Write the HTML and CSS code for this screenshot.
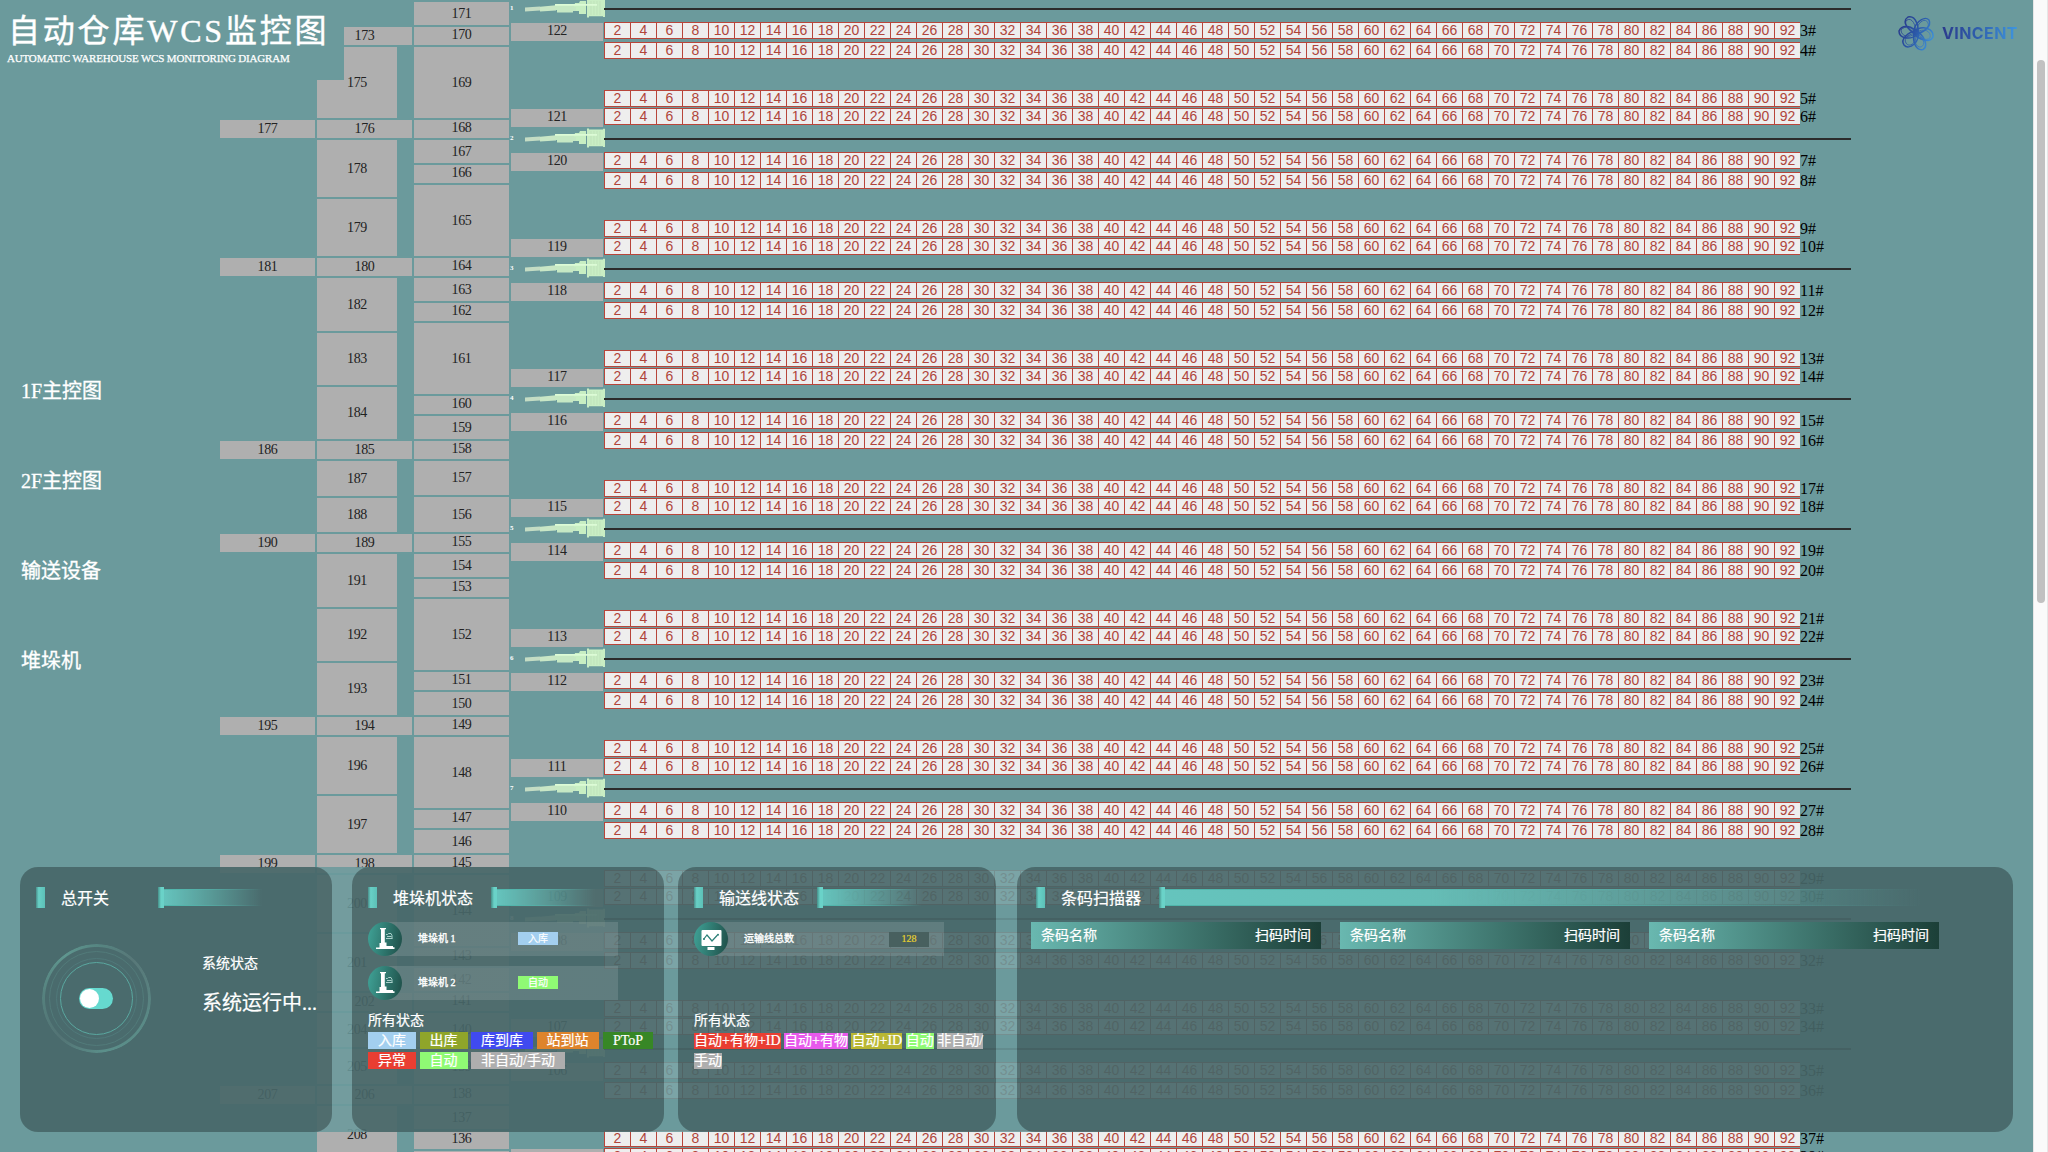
FILE: index.html
```html
<!DOCTYPE html>
<html lang="zh-CN">
<head>
<meta charset="utf-8">
<title>自动仓库WCS监控图</title>
<link rel="stylesheet" href="styles.css">
</head>
<body>
<svg class="defs" width="0" height="0" aria-hidden="true">
  <symbol id="crane" viewBox="0 0 80 20">
    <path d="M0 9.6 15 8.6V12.4L0 13.6Z" fill="#c4dcc4"/>
    <path d="M15 8.8 31 7.2V12.6L15 13.4Z" fill="#c9e6c6"/>
    <path d="M30 6H55V13H48V14.4H32V12H30Z" fill="#c6e8c4"/>
    <path d="M50 5 54 5 55 3H61V16H54V13H51V9H49Z" fill="#c8efc3"/>
    <path d="M62 .4H64V1.6H78V.8H80V19H78V18.2H64V19.4H62Z" fill="#c9eec4"/>
    <path d="M66 3V17M69 3V17M72 3V17M75 3V17" stroke="#bcdcb9" stroke-width=".7"/>
    <path d="M30 6.8H72" stroke="#dcfbd6" stroke-width="1.8"/>
  </symbol>
  <symbol id="stacker" viewBox="0 0 34 34">
    <path d="M12 6h6v1.200h-1.200V20.500H18.500v3.500h6.500v1.200h1.500v1.800H8v-1.600h3.500V21H13V7.200h-1Z" fill="#fff"/>
    <path d="M18 16.500h6.500M18 12.500h1.500l1-1h2.500l1 2v3M19 14.500h4.500" stroke="#a9cfca" stroke-width="1" fill="none"/>
  </symbol>
  <symbol id="monitor" viewBox="0 0 34 34">
    <rect x="7.500" y="8" width="20" height="16" rx="1" fill="#fff"/>
    <path d="M9.500 17.500 13 13l5 6 5.500-6" stroke="#2b7f77" stroke-width="1.200" fill="none"/>
    <circle cx="10" cy="17" r="1" fill="#2b7f77"/><circle cx="24" cy="12.800" r="1" fill="#2b7f77"/>
    <path d="M13.500 25h7v3h-7Z" fill="#fff"/>
  </symbol>
</svg>

<div class="screen">
  <main class="map">
    <div class="lane lane-a" id="laneA"></div>
    <div class="lane" id="laneB"></div>
    <div class="lane" id="laneC"></div>
    <div class="ports" id="ports"></div>
    <div class="racks" id="racks"></div>
  </main>

  <header class="title">
    <h1>自动仓库WCS监控图</h1>
    <p>AUTOMATIC WAREHOUSE WCS MONITORING DIAGRAM</p>
  </header>

  <div class="logo">
    <svg width="36" height="36" viewBox="-18 -18 36 36">
      <defs>
        <linearGradient id="lg" gradientUnits="userSpaceOnUse" x1="-17" y1="-8" x2="17" y2="8">
          <stop offset="0" stop-color="#27388a"/><stop offset=".5" stop-color="#2b58a8"/><stop offset="1" stop-color="#3d93dc"/>
        </linearGradient>
      </defs>
      <g fill="none" stroke="url(#lg)" stroke-width="1.500">
        <path d="M1 2C-10-4-14-12-8-16 0-18 4-5 1 2Z"/>
        <path d="M-2 2C-4-9 8-18 13-13 16-7 8 0-2 2Z"/>
        <path d="M-3-1C7-9 18-4 17 4 14 10 3 8-3-1Z"/>
        <path d="M-1-3C10 3 12 14 7 16.500 0 18-5 8-1-3Z"/>
        <path d="M2-3C5 9-7 18-12 12-16 6-8-1 2-3Z"/>
        <path d="M3 1C-7 8-17 5-17-2-14-9-4-8 3 1Z"/>
        <path stroke-width=".8" d="M0 0C-8-4-13-9-9-13-4-16 0-8 0 0ZM0 0C0-9 9-17 12-10 14-5 7-1 0 0ZM0 0C7-6 16-2 14 5 10 8 4 6 0 0ZM0 0C8 4 10 12 5 14 0 15-3 7 0 0ZM0 0C2 8-6 16-10 10-13 5-7 1 0 0ZM0 0C-7 6-15 3-15-3-11-8-4-6 0 0Z"/>
      </g>
    </svg>
    <span>VINCENT</span>
  </div>

  <nav class="menu">
    <a>1F主控图</a><a>2F主控图</a><a>输送设备</a><a>堆垛机</a>
  </nav>

  <section class="dock">
    <article class="panel p-switch">
      <h2><i class="mark"></i><span>总开关</span><i class="pin"></i><i class="beam"></i></h2>
      <div class="power">
        <div class="dial"><div class="ring r2"></div><div class="ring r3"></div><div class="ring r4"></div><div class="toggle"><b></b></div></div>
        <div class="state"><p>系统状态</p><strong>系统运行中...</strong></div>
      </div>
    </article>
    <article class="panel p-stacker">
      <h2><i class="mark"></i><span>堆垛机状态</span><i class="pin"></i><i class="beam"></i></h2>
      <div class="device"><svg class="badge"><use href="#stacker"/></svg><b>堆垛机 1</b><em class="blue">入库</em></div>
      <div class="device"><svg class="badge"><use href="#stacker"/></svg><b>堆垛机 2</b><em class="green">自动</em></div>
      <div class="legend">
        <p>所有状态</p>
        <div><span class="blue">入库</span> <span class="olive">出库</span> <span class="indigo">库到库</span> <span class="orange">站到站</span> <span class="forest">PToP</span></div>
        <div><span class="red">异常</span> <span class="green">自动</span> <span class="grey">非自动/手动</span></div>
      </div>
    </article>
    <article class="panel p-line">
      <h2><i class="mark"></i><span>输送线状态</span><i class="pin"></i><i class="beam"></i></h2>
      <div class="device"><svg class="badge"><use href="#monitor"/></svg><b>运输线总数</b><em class="count">128</em></div>
      <div class="legend tight">
        <p>所有状态</p>
        <div><span class="red">自动+有物+ID</span> <span class="pink">自动+有物</span> <span class="mustard">自动+ID</span> <span class="green">自动</span> <span class="grey">非自动/<wbr>手动</span></div>
      </div>
    </article>
    <article class="panel p-scan">
      <h2><i class="mark"></i><span>条码扫描器</span><i class="pin"></i><i class="beam"></i></h2>
      <div class="tables">
        <div><span>条码名称</span><span>扫码时间</span></div>
        <div><span>条码名称</span><span>扫码时间</span></div>
        <div><span>条码名称</span><span>扫码时间</span></div>
      </div>
    </article>
  </section>

  <div class="scrollbar"><i></i></div>
</div>
<script src="script.js"></script>
</body>
</html>
```
FILE: styles.css
```css
* { box-sizing: border-box; margin: 0; padding: 0; }
body { width: 2048px; height: 1152px; overflow: hidden; background: #6b9a9c; font-family: "Liberation Serif", "Noto Sans CJK SC", serif; }
i, em { font-style: normal; }
.defs { position: absolute; }
.screen { position: relative; width: 2048px; height: 1152px; overflow: hidden; }

/* conveyor map */
.map { display: flex; height: 1152px; padding-left: 220px; align-items: flex-start; overflow: hidden; }
.lane { width: 95px; margin-right: 2px; flex: none; }
.cell { display: flex; align-items: center; justify-content: center; background: #afafaf; color: #222; font-size: 14px; line-height: 16px; letter-spacing: -.3px; }
.cell.half { width: 80px; }
.cell.slim { padding-bottom: 1px; }
.cell.up { padding-bottom: 3px; }
.ports { width: 92px; margin: -3px 1px 0 0; flex: none; }
.ports .cell { height: 18px; padding-bottom: 2px; }
.ports .cell.low { margin-top: 68px; }
.crane { display: flex; height: 26px; width: 94px; }
.crane span { width: 15px; margin-left: -1px; padding-top: 7px; color: #fff; font-size: 7px; line-height: 8px; font-weight: bold; flex: none; }
.crane svg { width: 80px; height: 20px; margin-top: 1px; flex: none; }
.racks { padding-top: 8px; flex: none; }
.rail { width: 1247px; height: 2px; background: #2c2c2c; margin: 13px 0 12px; }
.rail:first-child { margin-top: 0; }
.row { display: flex; height: 17px; }
.row i { width: 26px; background: #eee; border: 1px solid #b8453a; border-right: 0; color: #b0443a; font: 14px/15px "Liberation Sans", sans-serif; text-align: center; }
.row b { font-weight: normal; font-size: 16px; line-height: 18px; color: #000; }
.row.g3 { margin-top: 3px; }
.row.g31 { margin-top: 31px; }
.row.g1 { margin-top: 1px; }

/* overlays on the map */
.title { position: absolute; left: 0; top: 0; width: 344px; height: 80px; background: #6b9a9c; color: #fff; padding: 9px 0 0 8px; }
.title h1 { font-size: 32px; line-height: 44px; font-weight: normal; letter-spacing: 2.8px; white-space: nowrap; -webkit-text-stroke: .4px #fff; }
.title p { font-size: 11px; line-height: 12px; margin: -1px 0 0 -1px; letter-spacing: -.18px; white-space: nowrap; -webkit-text-stroke: .25px #fff; }
.logo { position: absolute; left: 1898px; top: 15px; display: flex; align-items: center; gap: 8px; }
.logo span { font: 700 16px/20px Inter, sans-serif; letter-spacing: .4px; background: linear-gradient(90deg, #2b3a8c, #2e5cab 45%, #3f97df); -webkit-background-clip: text; background-clip: text; color: transparent; }
.menu { position: absolute; left: 21px; top: 346px; display: flex; flex-direction: column; color: #fff; font-size: 20px; line-height: 90px; -webkit-text-stroke: .3px #fff; }

/* bottom dock */
.dock { position: absolute; left: 0; top: 867px; width: 2033px; height: 265px; padding-left: 20px; display: flex; background: rgba(107, 154, 156, .88); color: #fff; -webkit-text-stroke: .2px #fff; }
.panel { border-radius: 18px; background: rgba(0, 0, 0, .3); padding: 20px 0 0 16px; flex: none; }
.p-switch, .p-stacker { width: 312px; margin-right: 20px; }
.p-stacker { margin-right: 14px; }
.p-line { width: 318px; margin-right: 21px; }
.p-scan { width: 996px; }
.panel h2 { display: flex; align-items: center; height: 21px; font-size: 16px; line-height: 21px; font-weight: normal; white-space: nowrap; }
.mark { width: 9px; height: 21px; background: linear-gradient(90deg, #4a908c, #68d0c6 30%, #5cc0b7); }
.panel h2 span { margin: 0 18px 0 16px; padding-top: 2px; }
.pin { width: 6px; height: 21px; background: linear-gradient(90deg, #459089, #6ad2c8 50%); }
.beam { width: 98px; height: 17px; border: solid; border-width: 1px 0; border-image: linear-gradient(90deg, #4fb5ab, transparent) 1; background: linear-gradient(90deg, #65c4bd, rgba(101, 196, 189, 0)); }
.p-switch h2 .pin { margin-left: 31px; }
.p-scan .beam { width: 756px; background: linear-gradient(90deg, #65c4bd, #65bdb6 35%, rgba(101, 189, 182, 0)); }
.p-scan h2 { padding-left: 3px; }

.power { display: flex; padding: 36px 0 0 6px; }
.dial { position: relative; width: 109px; height: 109px; border-radius: 50%; display: flex; align-items: center; justify-content: center; }
.dial::before { content: ""; position: absolute; inset: 0; border-radius: 50%; background: conic-gradient(#568682, rgba(120,150,148,.3) 12%, #5a8a86 32%, #5b8f8a 48%, rgba(120,150,148,.2) 62%, #55807d 75%, #5f968f 90%, #568682); -webkit-mask: radial-gradient(circle, transparent 51px, #000 52px); mask: radial-gradient(circle, transparent 51px, #000 52px); }
.ring { position: absolute; border-radius: 50%; border: 1px solid #53807d; }
.r2 { inset: 7px; border-color: #527b7a; }
.r3 { inset: 14px; border-color: #50797a; }
.r4 { inset: 18px; border-color: #5aa8a0; }
.toggle { width: 34px; height: 21px; border-radius: 11px; background: #66d9cf; padding: 1px; margin-left: -1px; }
.toggle b { display: block; width: 19px; height: 19px; border-radius: 50%; background: #fff; }
.state { padding: 11px 0 0 51px; }
.state p { font-size: 14px; line-height: 18px; }
.state strong { display: block; font-weight: normal; font-size: 20px; line-height: 28px; margin-top: 16px; white-space: nowrap; }

.device { display: flex; align-items: center; position: relative; width: 250px; height: 34px; margin-top: 14px; background: linear-gradient(rgba(255,255,255,.12), rgba(255,255,255,.12)) no-repeat; background-size: 233px 34px; background-position: 17px 0; font-size: 10px; }
.device + .device { margin-top: 10px; }
.badge { width: 34px; height: 34px; border-radius: 50%; background: linear-gradient(100deg, #40a498, #1e4d47); flex: none; }
.device b { width: 100px; margin-left: 16px; line-height: 14px; font-weight: normal; -webkit-text-stroke: .35px #fff; }
.device em { width: 40px; height: 13px; line-height: 13px; text-align: center; margin-top: -1px; }
.device .count { margin: 1px 0 0 45px; height: 15px; line-height: 14px; background: #48605f; color: #e8d22e; -webkit-text-stroke: .2px #e8d22e; }

.legend { font-size: 14px; line-height: 20px; padding-top: 11px; }
.legend p { line-height: 20px; }
.legend div { height: 20px; white-space: nowrap; display: flex; gap: 3.5px; }
.legend span { height: 17px; line-height: 17px; padding: 0 10px; margin-top: 1px; }
.tight { padding-top: 55px; }
.tight div { display: block; width: 292px; height: 40px; white-space: normal; }
.tight span { padding: 0 0 1px; line-height: 20px; }
.blue { background: #a3cfef; }
.olive { background: #8fa52a; }
.indigo { background: #404af0; }
.orange { background: #de842c; }
.forest { background: #378726; margin-left: 1px; }
.red { background: #e93e32; }
.green { background: #8ffa74; }
.grey { background: #aeaeae; }
.pink { background: #e859ec; }
.mustard { background: #b9b733; }

.tables { display: flex; gap: 19px; margin: 14px 0 0 -2px; }
.tables div { width: 290px; height: 27px; padding: 0 10px; display: flex; justify-content: space-between; align-items: center; background: linear-gradient(90deg, #69b8b0, #1c3f38); font-size: 14px; line-height: 20px; }

.scrollbar { position: absolute; right: 0; top: 0; width: 15px; height: 1152px; background: #fafafa; border: solid #e6e6e6; border-width: 0 1px; padding: 60px 0 0 3px; }
.scrollbar i { display: block; width: 8px; height: 543px; border-radius: 4px; background: #c1c1c1; }
```
FILE: script.js
```js
// [number, top, height, half-width]
var laneA = [[177,120,18],[181,258,18],[186,441,18],[190,534,18],[195,717,18],[199,855,18],[207,1086,18]];
var laneB = [[173,27,18],[175,47,71,1],[176,120,18],[178,140,57,1],[179,199,57,1],[180,258,18],[182,278,53,1],
  [183,333,52,1],[184,387,52,1],[185,441,18],[187,461,35,1],[188,498,34,1],[189,534,18],[191,554,53,1],[192,609,52,1],
  [193,663,52,1],[194,717,18],[196,737,57,1],[197,796,57,1],[198,855,18],[200,875,57,1],[201,934,57,1],[202,993,18],
  [204,1013,34,1],[205,1049,35,1],[206,1086,18],[208,1106,57,1]];
var laneC = [[171,2,23],[170,27,18],[169,47,71],[168,120,18],[167,140,23],[166,165,18],[165,185,71],[164,258,18],
  [163,278,23],[162,303,18],[161,323,71],[160,396,18],[159,416,23],[158,441,18],[157,461,34],[156,497,35],[155,534,18],
  [154,554,23],[153,579,18],[152,599,71],[151,672,18],[150,692,23],[149,717,18],[148,737,71],[147,810,18],[146,830,23],
  [145,855,18],[144,875,71],[143,948,18],[142,968,23],[141,993,18],[140,1013,34],[139,1049,35],[138,1086,18],
  [137,1106,23],[136,1131,18],['',1151,23]];

function fillLane(id, cells, slimClass) {
  var y = 0, html = '';
  cells.forEach(function (c) {
    var cls = 'cell' + (c[3] ? ' half' : '') + (c[2] === 18 ? slimClass : '');
    html += '<div class="' + cls + '" style="margin-top:' + (c[1] - y) + 'px;height:' + c[2] + 'px">' + c[0] + '</div>';
    y = c[1] + c[2];
  });
  document.getElementById(id).innerHTML = html;
}
fillLane('laneA', laneA, ' slim');
fillLane('laneB', laneB, ' slim');
fillLane('laneC', laneC, ' up');

var ports = '', racks = '', cells = '';
for (var n = 2; n <= 92; n += 2) cells += '<i>' + n + '</i>';
for (var g = 0; g < 9; g++) {
  ports += '<div class="crane"><span>' + (g + 1) + '</span><svg><use href="#crane"/></svg></div>' +
    '<div class="cell">' + (122 - 2 * g) + '</div><div class="cell low">' + (g < 8 ? 121 - 2 * g : '') + '</div>';
  racks += '<div class="rail"></div>';
  ['', ' g3', ' g31', ' g1'].forEach(function (gap, k) {
    racks += '<div class="row' + gap + '">' + cells + '<b>' + (3 + 4 * g + k) + '#</b></div>';
  });
}
document.getElementById('ports').innerHTML = ports;
document.getElementById('racks').innerHTML = racks;
```
